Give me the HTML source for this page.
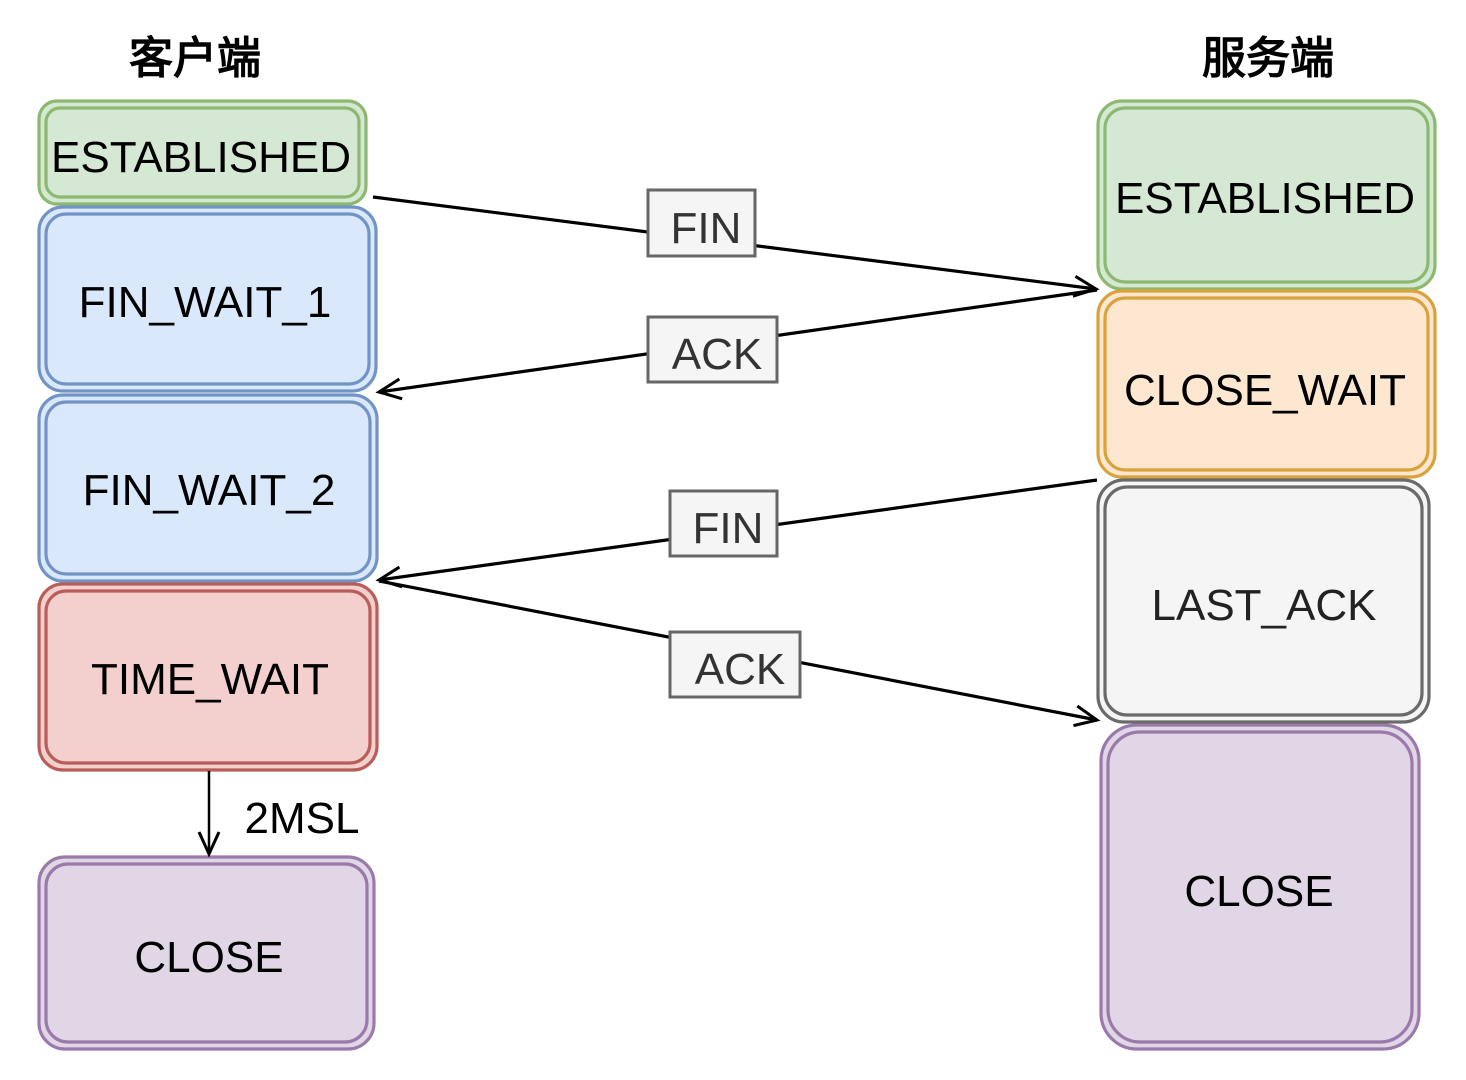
<!DOCTYPE html>
<html><head><meta charset="utf-8"><style>
html,body{margin:0;padding:0;background:#fff;}
svg{display:block}
text{font-family:"Liberation Sans",Arial,sans-serif;}
</style></head><body>
<svg width="1466" height="1080" viewBox="0 0 1466 1080" xmlns="http://www.w3.org/2000/svg">
<defs>
<marker id="a" markerWidth="30" markerHeight="30" refX="0" refY="0" orient="auto" markerUnits="userSpaceOnUse" viewBox="-25 -15 30 30">
<path d="M-22,-10 L0,0 L-22,10" fill="none" stroke="#000" stroke-width="3"/>
</marker>
</defs>
<g font-family="'Liberation Sans','Noto Sans CJK SC',sans-serif" font-size="44" font-weight="bold">
<text x="195" y="73" text-anchor="middle">客户端</text>
<text x="1268" y="73" text-anchor="middle">服务端</text>
</g>
<!-- boxes -->
<g stroke-width="3.2">
<g fill="#d5e8d4" stroke="#8cb86f">
<rect x="39" y="101" width="327" height="103" rx="18"/><rect x="46" y="108" width="313" height="89" rx="14"/>
<rect x="1098" y="101" width="337" height="188" rx="24"/><rect x="1105" y="108" width="323" height="174" rx="20"/>
</g>
<g fill="#dae8fc" stroke="#7294c4">
<rect x="39" y="207" width="337" height="184" rx="24"/><rect x="46" y="214" width="323" height="170" rx="20"/>
<rect x="39" y="395" width="338" height="186" rx="24"/><rect x="46" y="402" width="324" height="172" rx="20"/>
</g>
<g fill="#f3cfcd" stroke="#b95d58">
<rect x="39" y="584" width="338" height="186" rx="24"/><rect x="46" y="591" width="324" height="172" rx="20"/>
</g>
<g fill="#e0d6e6" stroke="#9a7aab">
<rect x="39" y="857" width="335" height="192" rx="26"/><rect x="46" y="864" width="321" height="178" rx="22"/>
<rect x="1101" y="725" width="318" height="324" rx="36"/><rect x="1108" y="732" width="304" height="310" rx="32"/>
</g>
<g fill="#fde7d0" stroke="#d9a23a">
<rect x="1098" y="291" width="337" height="186" rx="24"/><rect x="1105" y="298" width="323" height="172" rx="20"/>
</g>
<g fill="#f5f5f5" stroke="#6a6a6a">
<rect x="1098" y="480" width="331" height="242" rx="26"/><rect x="1105" y="487" width="317" height="228" rx="22"/>
</g>
</g>
<g font-size="44" text-anchor="middle" fill="#000">
<text x="201" y="172" textLength="300" lengthAdjust="spacingAndGlyphs">ESTABLISHED</text>
<text x="205" y="317">FIN_WAIT_1</text>
<text x="209" y="505">FIN_WAIT_2</text>
<text x="210" y="694">TIME_WAIT</text>
<text x="209" y="972">CLOSE</text>
<text x="1265" y="213" textLength="300" lengthAdjust="spacingAndGlyphs">ESTABLISHED</text>
<text x="1265" y="405">CLOSE_WAIT</text>
<text x="1264" y="620" fill="#222">LAST_ACK</text>
<text x="1259" y="906">CLOSE</text>
<text x="302" y="833" font-size="44">2MSL</text>
</g>
<!-- arrows -->
<g stroke="#000" stroke-width="3.2" fill="none">
<line x1="373" y1="197" x2="1096" y2="289" marker-end="url(#a)"/>
<line x1="1097" y1="290" x2="379" y2="392" marker-end="url(#a)"/>
<line x1="1097" y1="480" x2="379" y2="580" marker-end="url(#a)"/>
<line x1="379" y1="581" x2="1097" y2="720" marker-end="url(#a)"/>
<line x1="209" y1="771" x2="209" y2="854" stroke-width="2.5" marker-end="url(#a)"/>
</g>
<!-- labels -->
<g fill="#f5f5f5" stroke="#666666" stroke-width="3">
<rect x="648" y="190" width="107" height="66"/>
<rect x="648" y="317" width="129" height="65"/>
<rect x="670" y="491" width="107" height="65"/>
<rect x="670" y="632" width="130" height="65"/>
</g>
<g font-size="44" text-anchor="middle" fill="#333">
<text x="706" y="243">FIN</text>
<text x="717" y="369">ACK</text>
<text x="728" y="543">FIN</text>
<text x="740" y="684">ACK</text>
</g>
</svg>
</body></html>
